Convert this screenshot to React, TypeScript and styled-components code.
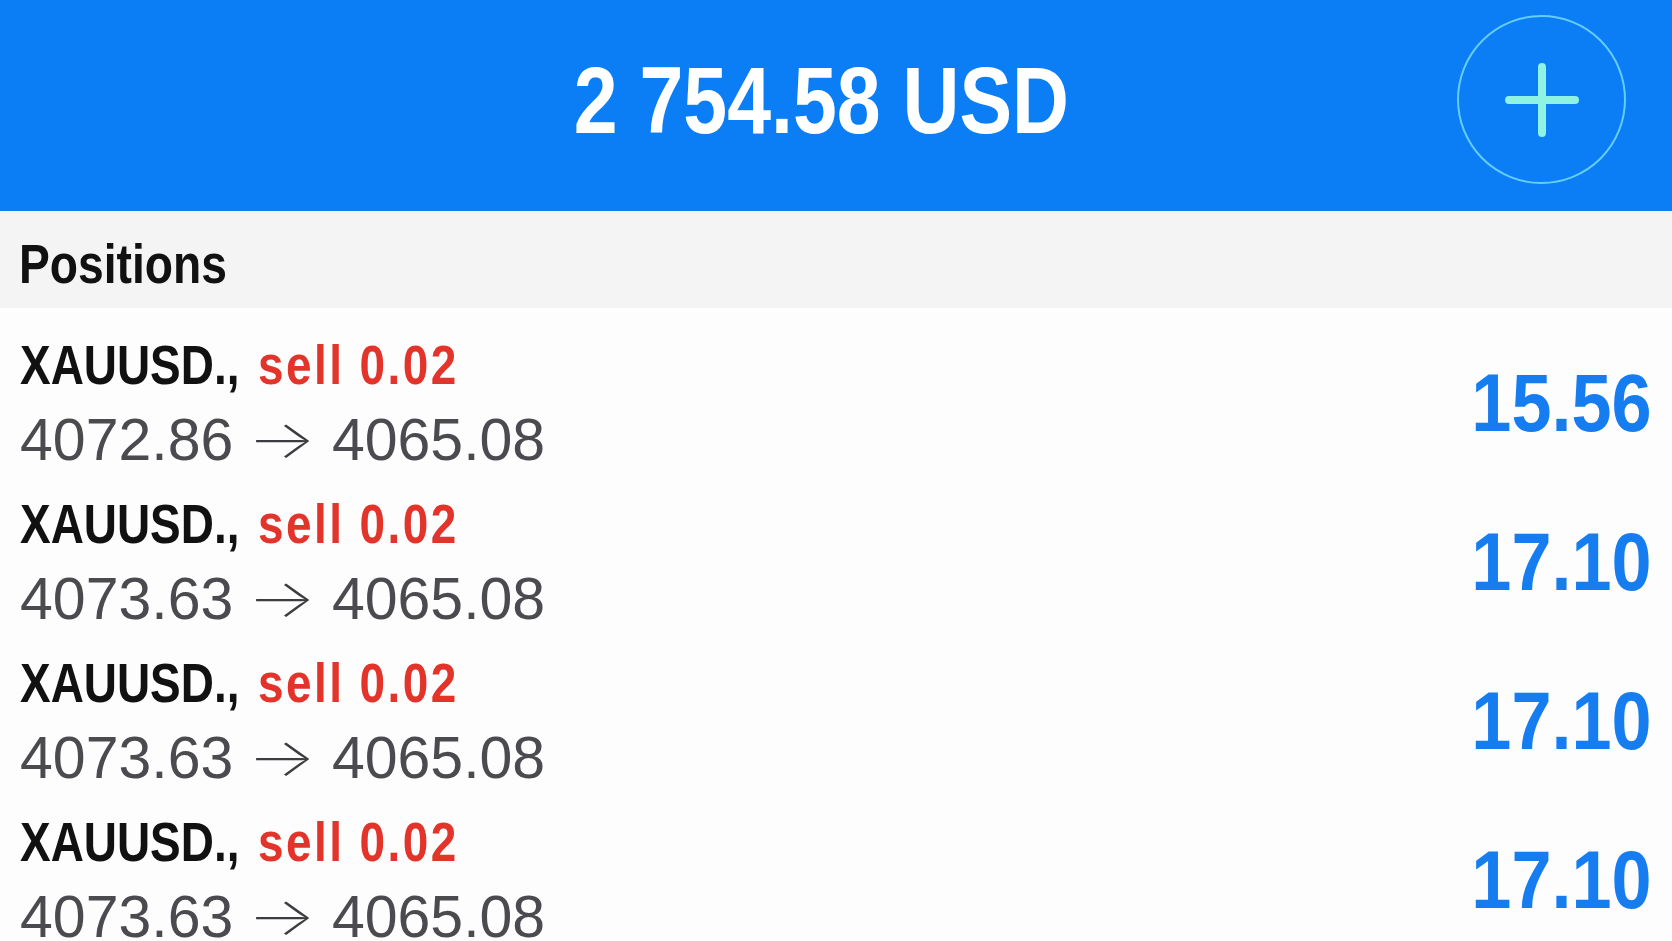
import * as React from "react";
import styled, { createGlobalStyle } from "styled-components";

const GlobalStyle = createGlobalStyle`
  html, body {
    margin: 0;
    padding: 0;
    background: #fdfdfd;
  }
  body {
    font-family: "Liberation Sans", Arial, sans-serif;
  }
`;

const SANS = `"Liberation Sans", Arial, sans-serif`;

const Page = styled.div`
  width: 100%;
  min-height: 100vh;
  background: #fdfdfd;
  overflow: hidden;
`;

// no condensed face is installed, so narrow the glyphs by hand
const Condensed = styled.span<{ $scale: number; $origin?: string }>`
  display: inline-block;
  white-space: nowrap;
  transform: scaleX(${(p) => p.$scale});
  transform-origin: ${(p) => p.$origin ?? "left"} center;
`;

const Header = styled.header`
  display: flex;
  align-items: center;
  height: 211px;
  box-sizing: border-box;
  padding: 0 46px 12px 185px;
  background: #0b7ef6;
`;

const Balance = styled.h1`
  flex: 1;
  margin: 0;
  text-align: center;
  font-family: ${SANS};
  font-weight: 700;
  font-size: 95px;
  line-height: 94px;
  color: #ffffff;
`;

const AddButton = styled.button`
  display: flex;
  align-items: center;
  justify-content: center;
  width: 169px;
  height: 169px;
  padding: 0;
  border-radius: 50%;
  border: 2.5px solid rgba(118, 218, 252, 0.85);
  background: transparent;
  cursor: pointer;
`;

const SectionTitle = styled.div`
  padding: 25px 20px 16px 19px;
  background: #f4f4f4;
  font-family: ${SANS};
  font-weight: 700;
  font-size: 56px;
  line-height: 56px;
  color: #111111;
`;

const List = styled.ul`
  list-style: none;
  margin: 0;
  padding: 16px 0 0;
`;

const Row = styled.li`
  display: flex;
  align-items: center;
  justify-content: space-between;
  padding: 11px 20px 11px 20px;
`;

const Info = styled.div`
  display: flex;
  flex-direction: column;
  align-items: flex-start;
  gap: 13px;
`;

const Title = styled.div`
  font-family: ${SANS};
  font-weight: 700;
  font-size: 56px;
  line-height: 60px;
  word-spacing: 7px;
  color: #111111;
`;

const Side = styled.span<{ $type: "buy" | "sell" }>`
  color: ${(p) => (p.$type === "sell" ? "#e3342b" : "#157cf0")};
  letter-spacing: 3px;
  word-spacing: 0;
`;

const Prices = styled.div`
  display: flex;
  align-items: center;
  font-family: ${SANS};
  font-weight: 400;
  font-size: 59px;
  line-height: 64px;
  color: #4a4a4f;
  white-space: nowrap;
`;

// long thin arrow: a smaller glyph stretched sideways
const Arrow = styled.span`
  display: inline-block;
  margin: 0 25px 0 24px;
  font-family: Inter, "DejaVu Sans", sans-serif;
  font-weight: 200;
  font-size: 52px;
  line-height: 64px;
  color: #3c3c41;
  transform: scaleX(1.4);
`;

const Profit = styled.div`
  font-family: ${SANS};
  font-weight: 700;
  font-size: 81px;
  line-height: 81px;
  color: #167df1;
`;

type Position = {
  symbol: string;
  type: "buy" | "sell";
  volume: string;
  open: string;
  current: string;
  profit: string;
};

const positions: Position[] = [
  { symbol: "XAUUSD.", type: "sell", volume: "0.02", open: "4072.86", current: "4065.08", profit: "15.56" },
  { symbol: "XAUUSD.", type: "sell", volume: "0.02", open: "4073.63", current: "4065.08", profit: "17.10" },
  { symbol: "XAUUSD.", type: "sell", volume: "0.02", open: "4073.63", current: "4065.08", profit: "17.10" },
  { symbol: "XAUUSD.", type: "sell", volume: "0.02", open: "4073.63", current: "4065.08", profit: "17.10" }
];

const PlusIcon: React.FC = () => (
  <svg width="74" height="74" viewBox="0 0 74 74" fill="none">
    <path
      d="M37 4v66M4 37h66"
      stroke="#8ef3e3"
      strokeWidth="8"
      strokeLinecap="round"
    />
  </svg>
);

const App: React.FC = () => (
  <Page>
    <GlobalStyle />
    <Header>
      <Balance>
        <Condensed $scale={0.83} $origin="center">
          2 754.58 USD
        </Condensed>
      </Balance>
      <AddButton aria-label="New order">
        <PlusIcon />
      </AddButton>
    </Header>
    <SectionTitle>
      <Condensed $scale={0.825}>Positions</Condensed>
    </SectionTitle>
    <List>
      {positions.map((p, i) => (
        <Row key={i}>
          <Info>
            <Title>
              <Condensed $scale={0.82}>
                {p.symbol},{" "}
                <Side $type={p.type}>
                  {p.type} {p.volume}
                </Side>
              </Condensed>
            </Title>
            <Prices>
              <span>{p.open}</span>
              <Arrow>→</Arrow>
              <span>{p.current}</span>
            </Prices>
          </Info>
          <Profit>
            <Condensed $scale={0.89} $origin="right">
              {p.profit}
            </Condensed>
          </Profit>
        </Row>
      ))}
    </List>
  </Page>
);

export default App;
